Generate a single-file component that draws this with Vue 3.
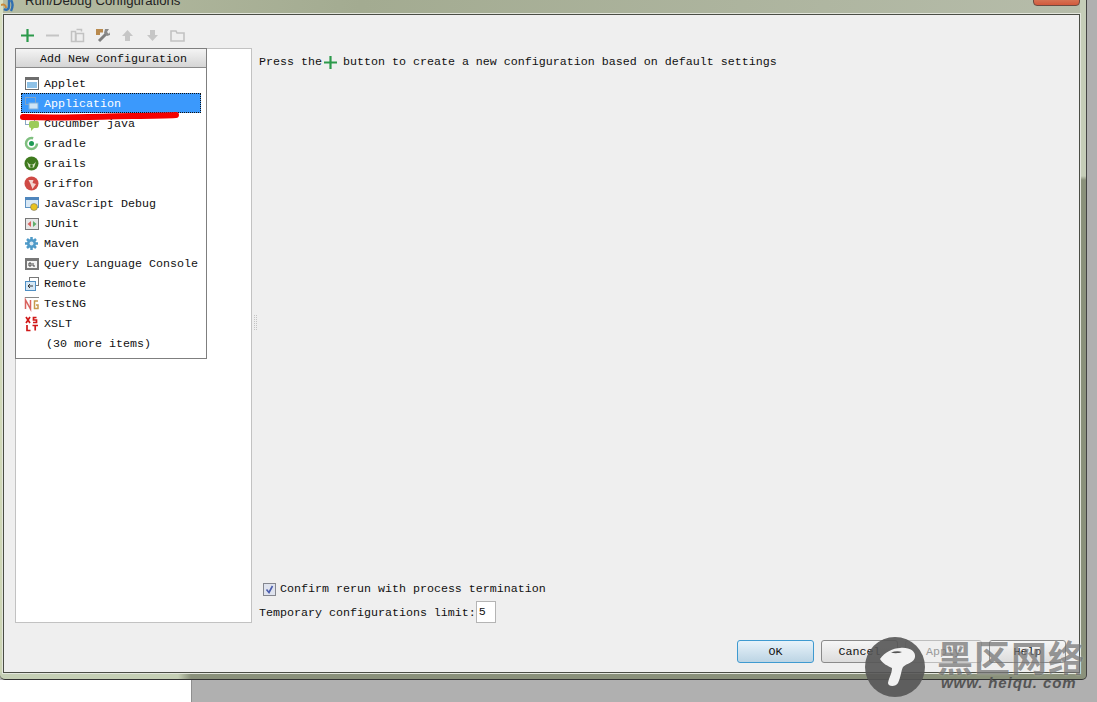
<script setup>
const items = [
  { k: 'applet', t: 'Applet' },
  { k: 'app', t: 'Application', sel: true },
  { k: 'cuke', t: 'Cucumber java' },
  { k: 'gradle', t: 'Gradle' },
  { k: 'grails', t: 'Grails' },
  { k: 'griffon', t: 'Griffon' },
  { k: 'js', t: 'JavaScript Debug' },
  { k: 'junit', t: 'JUnit' },
  { k: 'maven', t: 'Maven' },
  { k: 'query', t: 'Query Language Console' },
  { k: 'remote', t: 'Remote' },
  { k: 'testng', t: 'TestNG' },
  { k: 'xslt', t: 'XSLT' },
]
</script>

<template>
  <div class="page">
    <div class="window">
      <div class="titlebar">
        <svg class="logo" width="16" height="14" viewBox="0 0 16 14"><path d="M0 5c3-1 5 0 5 3" fill="none" stroke="#c98a3a" stroke-width="2"/><path d="M3 9c3 2 5 0 5-3V0M10 0c2 3 2 7 0 11" fill="none" stroke="#2f6fb0" stroke-width="2.400"/></svg>
        <span class="title">Run/Debug Configurations</span>
        <span class="close"></span>
      </div>
      <div class="dialog">
        <div class="toolbar">
          <span class="tool"><svg width="13" height="13" viewBox="0 0 13 13"><path d="M0 6.500h13M6.500 0v13" stroke="#2c9a4b" stroke-width="2.200"/></svg></span>
          <span class="tool"><svg width="13" height="13" viewBox="0 0 13 13"><path d="M0 6.500h13" stroke="#c4c4c4" stroke-width="2"/></svg></span>
          <span class="tool"><svg width="15" height="15" viewBox="0 0 15 15"><path d="M1.500 3.500h4v10h-4zM6.500 1.500h5v2M6 5.500h7.500v8H6z" fill="#eee" stroke="#c2c2c2" stroke-width="1.500"/></svg></span>
          <span class="tool"><svg width="16" height="16" viewBox="0 0 16 16"><path d="M1 2h7v3.500H5V8H1z" fill="#b98a4e"/><path d="M4 14l8-8" stroke="#7f7f7f" stroke-width="3"/><path d="M10 2l4 0-2 3 2 2 1-2v3l-3 1-3-3z" fill="#8a8a8a"/></svg></span>
          <span class="tool"><svg width="13" height="13" viewBox="0 0 13 13"><path d="M6.500 1L12 7H9v5H4V7H1z" fill="#c6c6c6"/></svg></span>
          <span class="tool"><svg width="13" height="13" viewBox="0 0 13 13"><path d="M6.500 12L12 6H9V1H4v5H1z" fill="#c6c6c6"/></svg></span>
          <span class="tool"><svg width="15" height="13" viewBox="0 0 15 13"><path d="M1 2h5l1 2h7v8H1z" fill="none" stroke="#c2c2c2" stroke-width="1.600"/></svg></span>
        </div>
        <div class="body">
          <div class="left">
            <div class="popup">
              <div class="popup-head">Add New Configuration</div>
              <ul class="list">
                <li v-for="it in items" :key="it.k" class="row" :class="{ sel: it.sel }">
                  <svg class="ic" width="16" height="16" viewBox="0 0 16 16">
                    <g v-if="it.k === 'applet'"><rect x="1.500" y="1.500" width="13" height="12" fill="#fff" stroke="#6d6d6d"/><rect x="1" y="1" width="14" height="3" fill="#6d6d6d"/><rect x="3" y="6" width="10" height="6" fill="#8ec1e6"/></g>
                    <g v-else-if="it.k === 'app'"><rect x="1.500" y="1.500" width="10" height="7" fill="none" stroke="#7fa3c7"/><rect x="5" y="7" width="9" height="6" fill="#cfe4f5" stroke="#7fb0dc"/></g>
                    <g v-else-if="it.k === 'cuke'"><rect x="1.500" y="0.500" width="9" height="8" fill="#fff" stroke="#8aa7c4"/><rect x="5" y="5" width="10" height="7" rx="2" fill="#9ccb5a"/><path d="M7 12v3l3-3z" fill="#9ccb5a"/></g>
                    <g v-else-if="it.k === 'gradle'"><circle cx="7.500" cy="7.500" r="5.500" fill="none" stroke="#7fbf7f" stroke-width="2.500" stroke-dasharray="27 8"/><circle cx="7.500" cy="7.500" r="2.500" fill="#1e9a55"/></g>
                    <g v-else-if="it.k === 'grails'"><circle cx="7.500" cy="7.500" r="7" fill="#3f7a1e"/><path d="M3 5.500c2 3 3.500 3 4.500 3s2.500 0 4.500-3l-2 6H5z" fill="#d9e6c5"/><circle cx="7.500" cy="10" r="1.400" fill="#3f7a1e"/></g>
                    <g v-else-if="it.k === 'griffon'"><circle cx="7.500" cy="7.500" r="7" fill="#cf4a45"/><path d="M4.500 4h5l-1 3 3.500 1-3.500 5-2-5z" fill="#f3d5d0"/></g>
                    <g v-else-if="it.k === 'js'"><rect x="1.500" y="1.500" width="13" height="10" fill="#d8e8f5" stroke="#5f93c4"/><rect x="1" y="1" width="14" height="3" fill="#4f86bd"/><circle cx="10" cy="11" r="3.500" fill="#e8c21e" stroke="#666" stroke-width=".5"/></g>
                    <g v-else-if="it.k === 'junit'"><rect x="1.500" y="2.500" width="13" height="11" fill="#e6e6e6" stroke="#777"/><path d="M7 5L3.500 8 7 11z" fill="#d9635f"/><path d="M9 5l3.500 3L9 11z" fill="#5fae6a"/></g>
                    <g v-else-if="it.k === 'maven'"><path d="M7.500 1v13M1 7.500h13M3 3l9 9M12 3l-9 9" stroke="#4f9ac8" stroke-width="2.500"/><circle cx="7.500" cy="7.500" r="4.500" fill="#4f9ac8"/><circle cx="7.500" cy="7.500" r="2" fill="#dbeaf4"/></g>
                    <g v-else-if="it.k === 'query'"><rect x="1" y="2" width="14" height="12" fill="#777"/><rect x="3" y="5" width="10" height="7" fill="#f1f1f1"/><path d="M5 7h2v3H5zM9 7v3h2" fill="none" stroke="#444"/></g>
                    <g v-else-if="it.k === 'remote'"><rect x="5.500" y="1.500" width="9" height="8" fill="#fff" stroke="#777"/><rect x="1.500" y="5.500" width="10" height="9" fill="#d5e7f5" stroke="#4f8fc4"/><path d="M9 10H4M6 8l-2 2 2 2" fill="none" stroke="#333"/></g>
                    <g v-else-if="it.k === 'testng'"><path d="M1 1.500h14" stroke="#888"/><path d="M1.500 13V4l5 9V4" fill="none" stroke="#d9635f" stroke-width="1.500"/><path d="M14 5h-3.500v7.500H14V9h-2" fill="none" stroke="#c89a4e" stroke-width="1.500"/></g>
                    <g v-else-if="it.k === 'xslt'"><path d="M2 1l4 6M6 1L2 7M12.500 1.500H9.500v2.500h3v2.500H9M3 9v5.500h3.500M8.500 9.500H14M11.200 9.500v5" fill="none" stroke="#d01818" stroke-width="1.700"/></g>
                  </svg>
                  <span>{{ it.t }}</span>
                </li>
                <li class="row more"><span>(30 more items)</span></li>
              </ul>
            </div>
          </div>
          <div class="splitter"><i v-for="n in 16" :key="n"></i></div>
          <div class="right">
            <div class="hint">
              <span>Press the</span>
              <svg width="13" height="13" viewBox="0 0 13 13"><path d="M0 6.500h13M6.500 0v13" stroke="#2c9a4b" stroke-width="2.200"/></svg>
              <span>button to create a new configuration based on default settings</span>
            </div>
            <div class="opts">
              <label class="check">
                <svg width="13" height="13" viewBox="0 0 13 13"><rect x=".5" y=".5" width="12" height="12" fill="#dfe3ee" stroke="#85878f"/><path d="M3.500 6.500l2.500 3 3.500-6.500" fill="none" stroke="#4a5cad" stroke-width="1.600"/></svg>
                <span>Confirm rerun with process termination</span>
              </label>
              <div class="limit">
                <span class="limit-text">Temporary configurations limit:</span>
                <span class="num">5</span>
              </div>
            </div>
          </div>
        </div>
        <div class="buttons">
          <button class="btn ok">OK</button>
          <button class="btn">Cancel</button>
          <button class="btn off">Apply</button>
          <button class="btn">Help</button>
        </div>
      </div>
    </div>
    <div class="strip"></div>
    <svg class="scribble" width="170" height="12" viewBox="0 0 170 12"><path d="M4 7C40 8 70 7 90 6.500S140 6 157 5" fill="none" stroke="#f40000" stroke-width="6" stroke-linecap="round"/></svg>
    <div class="mark">
      <svg width="60" height="60" viewBox="0 0 60 60">
        <circle cx="30" cy="30" r="30" fill="#555" fill-opacity=".9"/>
        <path d="M15 22C20 15 28 11 35 11 44 10 51 14 50 20 49 26 42 26 38 30 36 34 36 40 33 46 31 50 23 50 23 46 24 40 27 37 27 31 23 29 18 27 15 22z" fill="#f2f2f2"/>
        <path d="M26 15.500c4-1.500 8-1.500 11-.5-3 1.500-8 1.500-11 .5z" fill="#555"/>
      </svg>
      <div class="mark-text">
        <span class="cn">黑区网络</span>
        <span class="url">www. heiqu. com</span>
      </div>
    </div>
  </div>
</template>

<style>
html, body { margin: 0; background: #b0b0b0; }
</style>

<style scoped>
.page {
  position: relative;
  width: 1097px;
  height: 702px;
  overflow: hidden;
  background: #b0b0b0;
  font: 11.67px "Liberation Mono", monospace;
  color: #111;
}
.window {
  width: 1087px;
  height: 680px;
  box-sizing: border-box;
  padding: 0 6px 6px 3px;
  display: flex;
  flex-direction: column;
  background:
    linear-gradient(90deg, #c5cfb5 0 178px, #8a917b 191px) left bottom / 100% 7px no-repeat,
    linear-gradient(180deg, #c5cdb8 0 176px, #8a917b 180px) right top / 6px 100% no-repeat,
    linear-gradient(180deg, #d8dfc0, #ccd4b4) left top / 3px 100% no-repeat,
    linear-gradient(100deg, #b5bca2, #a3ab91 30%, #b9bfae);
  border-right: 1px solid #444;
  border-bottom: 1px solid #333;
  border-radius: 0 0 5px 5px;
}
.titlebar {
  height: 14px;
  flex: none;
  position: relative;
}
.logo { position: absolute; left: -2px; top: 0; }
.title {
  position: absolute;
  left: 22px;
  top: -7px;
  font: 13.200px "Liberation Sans", sans-serif;
  white-space: nowrap;
  color: #222;
}
.close {
  position: absolute;
  right: 0;
  top: -6px;
  width: 45px;
  height: 10px;
  background: linear-gradient(#d98a6a, #d2593c);
  border: 1px solid #6d4a40;
  border-radius: 0 0 4px 4px;
}
.dialog {
  flex: 1;
  min-height: 0;
  display: flex;
  flex-direction: column;
  background: #efefef;
  border: 1px solid #4a4d45;
  box-shadow: 0 0 0 1px #e3e6dd;
  padding: 0 0 0 11px;
}
.toolbar {
  height: 33px;
  display: flex;
  align-items: center;
  flex: none;
  padding: 7px 0 0;
  box-sizing: border-box;
}
.tool {
  width: 25px;
  display: flex;
  justify-content: center;
}
.body {
  height: 575px;
  flex: none;
  display: flex;
}
.left {
  width: 237px;
  flex: none;
  box-sizing: border-box;
  background: #fff;
  border: 1px solid #c2c2c2;
}
.popup {
  width: 192px;
  height: 311px;
  box-sizing: border-box;
  border: 1px solid #7f7f7f;
  background: #fff;
  margin: -1px 0 0 -1px;
}
.popup-head {
  height: 18px;
  line-height: 20px;
  padding-left: 5px;
  text-align: center;
  background: linear-gradient(#f4f4f4, #d5d5d5);
  border-bottom: 1px solid #8a8a8a;
  color: #111;
}
.list {
  list-style: none;
  margin: 5px 0 0;
  padding: 0 5px;
}
.row {
  height: 20px;
  display: flex;
  align-items: center;
  gap: 4px;
  padding: 2px 0 0 3px;
  box-sizing: border-box;
}
.row.sel {
  background: #3b99fc;
  color: #fff;
  outline: 1px dotted #111;
  outline-offset: -1px;
}
.more { padding-left: 25px; }
.ic { flex: none; }
.splitter {
  width: 6px;
  flex: none;
  box-sizing: border-box;
  padding-top: 267px;
  display: grid;
  grid-template-columns: 1px 1px;
  grid-auto-rows: 1px;
  gap: 1px;
  align-content: start;
  justify-content: center;
}
.splitter i { background: #c4c4c4; }
.right {
  flex: 1;
  min-width: 0;
  display: flex;
  flex-direction: column;
  justify-content: space-between;
  padding: 7px 0 0 1px;
}
.hint {
  display: flex;
  align-items: center;
  height: 14px;
}
.hint svg { margin: 0 6px 0 2px; }
.opts { display: flex; flex-direction: column; }
.check {
  display: flex;
  align-items: center;
  gap: 4px;
  height: 16px;
  padding-left: 4px;
  margin-bottom: 4px;
}
.limit { display: flex; align-items: center; height: 22px; }
.limit-text { padding-top: 2px; }
.num {
  height: 20px;
  line-height: 20px;
  padding-left: 2px;
  width: 16px;
  background: #fff;
  border: 1px solid #b4b4b4;
}
.buttons {
  flex: 1;
  display: flex;
  justify-content: flex-end;
  gap: 7px;
  padding: 17px 13px 0 0;
}
.btn {
  width: 77px;
  height: 23px;
  padding: 0;
  font: inherit;
  color: #111;
  background: linear-gradient(#f6f6f6, #dcdcdc);
  border: 1px solid #8a8a8a;
  border-radius: 3px;
}
.btn.ok {
  background: linear-gradient(#e8f3fa, #bcd4e4);
  border-color: #3f9ad0;
}
.btn.off { color: #9a9a9a; border-color: #bdbdbd; background: #efefef; }
.strip {
  position: absolute;
  left: 0;
  top: 680px;
  width: 191px;
  height: 22px;
  background: #fff;
  border-right: 1px solid #8f8f8f;
}
.scribble {
  position: absolute;
  left: 19px;
  top: 110px;
}
.mark {
  position: absolute;
  left: 865px;
  top: 637px;
  display: flex;
  gap: 12px;
}
.mark-text {
  display: flex;
  flex-direction: column;
}
.cn {
  font: 700 36px/38px "Noto Sans CJK SC", sans-serif;
  letter-spacing: 1px;
  color: rgba(85, 85, 85, .6);
  text-shadow: 0 0 2px rgba(255, 255, 255, .4);
  white-space: nowrap;
}
.url {
  font: italic 700 15px/16px "Liberation Sans", sans-serif;
  letter-spacing: .9px;
  color: #555;
  white-space: nowrap;
  margin: 0 0 0 4px;
}
</style>
